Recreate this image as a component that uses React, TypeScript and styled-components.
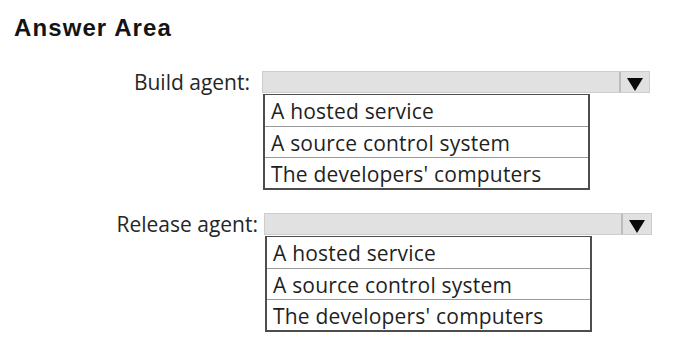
import React from "react";
import styled, { createGlobalStyle } from "styled-components";

const Global = createGlobalStyle`
  html, body { margin: 0; padding: 0; background: #ffffff; }
  body { width: 678px; height: 338px; overflow: hidden; }
`;

const Page = styled.div`
  padding: 12px 0 0 0;
`;

const Title = styled.h1`
  margin: 0 0 0 14px;
  font-family: "Liberation Sans", Arial, sans-serif;
  font-weight: 700;
  font-size: 24px;
  line-height: 32px;
  letter-spacing: 1.1px;
  color: #141414;
`;

const Group = styled.div<{ $barLeft: number; $top: number }>`
  display: grid;
  grid-template-columns: ${(p) => p.$barLeft}px 388px;
  margin-top: ${(p) => p.$top}px;
`;

const Label = styled.div<{ $gap: number }>`
  text-align: right;
  padding-right: ${(p) => p.$gap}px;
  font-family: "Open Sans", "Noto Sans", sans-serif;
  font-size: 21px;
  line-height: 24px;
  margin-top: -1px;
  color: #262626;
  white-space: nowrap;
`;

const Control = styled.div`
  display: flex;
  flex-direction: column;
`;

const Bar = styled.div`
  display: flex;
  height: 22px;
  box-sizing: border-box;
  background: #e1e1e1;
  border: 1px solid #cdcdcd;
`;

const BarField = styled.div`
  flex: 1;
`;

const ArrowBox = styled.div`
  width: 30px;
  border-left: 2px solid #bcbcbc;
  display: flex;
  align-items: flex-end;
  justify-content: center;
  padding-bottom: 1px;
  box-sizing: border-box;
`;

const List = styled.ul`
  list-style: none;
  margin: 1px 0 0 1px;
  padding: 0;
  width: 327px;
  box-sizing: border-box;
  border: 2px solid #4d4d4d;
  border-top-width: 1px;
  background: #ffffff;
`;

const Option = styled.li`
  height: 31px;
  box-sizing: border-box;
  padding: 3px 0 0 6px;
  font-family: "Open Sans", "Noto Sans", sans-serif;
  font-size: 21px;
  line-height: 26px;
  letter-spacing: 0.2px;
  color: #1f1f1f;
  white-space: nowrap;
  border-top: 1px solid #9a9a9a;
  &:first-child {
    border-top: none;
  }
`;

const Arrow = () => (
  <svg width="16" height="13" viewBox="0 0 16 13" aria-hidden="true">
    <polygon points="0,0 16,0 8,13" fill="#0a0a0a" />
  </svg>
);

const options = [
  "A hosted service",
  "A source control system",
  "The developers' computers",
];

const Dropdown = ({ label, barLeft, gap, top }: { label: string; barLeft: number; gap: number; top: number }) => (
  <Group $barLeft={barLeft} $top={top}>
    <Label $gap={gap}>{label}</Label>
    <Control>
      <Bar>
        <BarField />
        <ArrowBox>
          <Arrow />
        </ArrowBox>
      </Bar>
      <List>
        {options.map((o) => (
          <Option key={o}>{o}</Option>
        ))}
      </List>
    </Control>
  </Group>
);

export default function App() {
  return (
    <>
      <Global />
      <Page>
        <Title>Answer Area</Title>
        <Dropdown label="Build agent:" barLeft={262} gap={12} top={27} />
        <Dropdown label="Release agent:" barLeft={264} gap={6} top={23} />
      </Page>
    </>
  );
}
